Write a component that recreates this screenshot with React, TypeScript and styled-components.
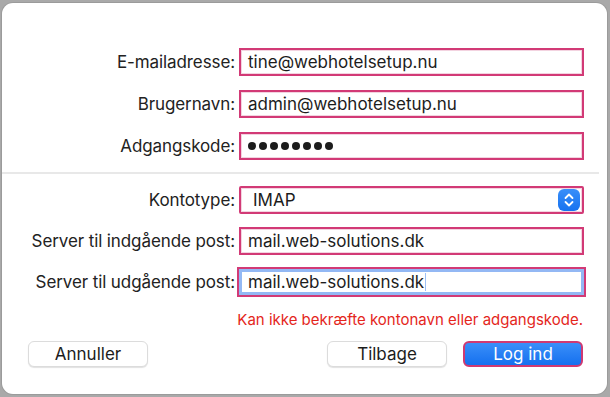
import styled, { createGlobalStyle } from 'styled-components'

const GlobalStyle = createGlobalStyle`
  html, body {
    margin: 0;
    padding: 0;
    background: #a9a9a9;
    font-family: Inter, "Liberation Sans", Arial, sans-serif;
  }
`

const topFields = [
  { label: 'E-mailadresse:', value: 'tine@webhotelsetup.nu' },
  { label: 'Brugernavn:', value: 'admin@webhotelsetup.nu' },
]

export default function App() {
  return (
    <>
      <GlobalStyle />
      <Screen>
        <Dialog>
          <Form $top={45} $gap={14}>
            {topFields.map((f) => (
              <Row key={f.label}>
                <Label>{f.label}</Label>
                <Field>{f.value}</Field>
              </Row>
            ))}
            <Row>
              <Label>Adgangskode:</Label>
              <Field>
                <Dots>
                  {Array.from({ length: 8 }).map((_, i) => (
                    <Dot key={i} />
                  ))}
                </Dots>
              </Field>
            </Row>
          </Form>

          <Divider />

          <Form $top={12} $gap={13}>
            <Row>
              <Label>Kontotype:</Label>
              <Select>
                <span>IMAP</span>
                <Stepper>
                  <svg width="12" height="16" viewBox="0 0 12 16" fill="none">
                    <path d="M2.5 6L6 2.5L9.5 6" stroke="#fff" strokeWidth="1.8" strokeLinecap="round" strokeLinejoin="round" />
                    <path d="M2.5 10L6 13.5L9.5 10" stroke="#fff" strokeWidth="1.8" strokeLinecap="round" strokeLinejoin="round" />
                  </svg>
                </Stepper>
              </Select>
            </Row>
            <Row>
              <Label>Server til indgående post:</Label>
              <Field>mail.web-solutions.dk</Field>
            </Row>
            <Row>
              <Label>Server til udgående post:</Label>
              <Field $focused>
                mail.web-solutions.dk<Caret />
              </Field>
            </Row>
          </Form>

          <ErrorText>Kan ikke bekræfte kontonavn eller adgangskode.</ErrorText>

          <Buttons>
            <Button>Annuller</Button>
            <Spacer />
            <Button>Tilbage</Button>
            <Button $primary>Log ind</Button>
          </Buttons>
        </Dialog>
      </Screen>
    </>
  )
}

const Screen = styled.div`
  width: 610px;
  height: 397px;
  padding: 3px 3px 3px 2px;
  box-sizing: border-box;
`

const Dialog = styled.div`
  height: 391px;
  background: #fff;
  border-radius: 11px;
  box-shadow: 0 0 0 1px rgba(0, 0, 0, 0.08);
  display: flex;
  flex-direction: column;
  overflow: hidden;
`

const Form = styled.div<{ $top: number; $gap: number }>`
  display: flex;
  flex-direction: column;
  gap: ${(p) => p.$gap}px;
  padding-top: ${(p) => p.$top}px;
`

const Row = styled.div`
  display: grid;
  grid-template-columns: 233px 345px;
  column-gap: 4px;
  align-items: center;
`

const Label = styled.div`
  text-align: right;
  font-size: 17px;
  color: #222;
  letter-spacing: -0.1px;
`

const Field = styled.div<{ $focused?: boolean }>`
  position: relative;
  height: ${(p) => (p.$focused ? 30 : 28)}px;
  margin: ${(p) => (p.$focused ? '-1px -2px' : '0')};
  box-sizing: border-box;
  display: flex;
  align-items: center;
  padding-left: ${(p) => (p.$focused ? 9 : 7)}px;
  font-size: 17px;
  color: #1c1c1c;
  border: 2px solid #d23a76;
  box-shadow: ${(p) =>
    p.$focused ? 'inset 0 0 0 3px #93b8f4' : 'inset 0 0 0 1px #f3d3e0'};
  background: #fff;
`

const Caret = styled.span`
  display: inline-block;
  width: 1px;
  height: 18px;
  margin-left: 1px;
  background: #9cc0f6;
`

const Dots = styled.span`
  display: flex;
  gap: 3px;
`

const Dot = styled.span`
  width: 8px;
  height: 8px;
  border-radius: 50%;
  background: #1c1c1c;
`

const Select = styled(Field)`
  justify-content: space-between;
  padding-left: 12px;
  padding-right: 2px;
  border-radius: 2px;
`

const Stepper = styled.div`
  width: 22px;
  height: 22px;
  border-radius: 6px;
  background: linear-gradient(#3a8ff9, #1672f0);
  display: flex;
  align-items: center;
  justify-content: center;
`

const Divider = styled.div`
  height: 2px;
  background: #e8e8e8;
  margin: 12px 8px 0 0;
`

const ErrorText = styled.div`
  margin-top: 14px;
  padding-right: 24px;
  text-align: right;
  font-size: 15px;
  color: #e4261c;
`

const Buttons = styled.div`
  display: flex;
  align-items: center;
  gap: 16px;
  padding: 12px 24px 0 26px;
`

const Spacer = styled.div`
  flex: 1;
`

const Button = styled.div<{ $primary?: boolean }>`
  width: 120px;
  height: 26px;
  box-sizing: border-box;
  border-radius: 6px;
  display: flex;
  align-items: center;
  justify-content: center;
  font-size: 17px;
  color: ${(p) => (p.$primary ? '#fff' : '#1c1c1c')};
  background: ${(p) => (p.$primary ? 'linear-gradient(#3a8ff9, #1570ef)' : '#fff')};
  border: ${(p) => (p.$primary ? '2px solid #cf3a72' : '1px solid #dcdcdc')};
  box-shadow: ${(p) => (p.$primary ? 'none' : '0 1px 1px rgba(0,0,0,0.12)')};
`
